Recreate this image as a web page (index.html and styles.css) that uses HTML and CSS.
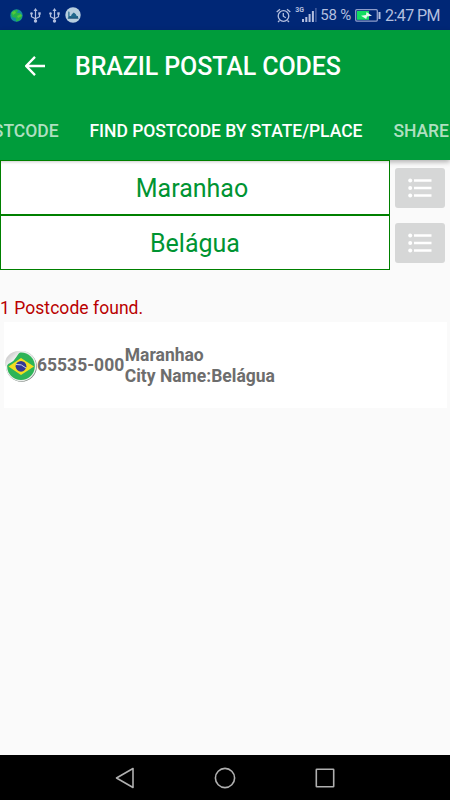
FILE: index.html
```html
<!DOCTYPE html>
<html lang="en">
<head>
    <meta charset="UTF-8">
    <meta name="viewport" content="width=device-width, initial-scale=1.0">
    <title>Brazil Postal Codes</title>
    <link rel="stylesheet" href="styles.css">
</head>
<body>
    <!-- Status bar -->
    <div class="status-bar">
        <div class="status-left">
            <svg class="globe" width="13" height="13" viewBox="0 0 13 13">
                <circle cx="6.5" cy="6.5" r="6.2" fill="#168d9c"/>
                <path d="M1 4 Q4 0 8 1 L7 4 L10 4 L12 7 Q11 12 6 12.5 L6 9 L2 8z" fill="#25b34b"/>
                <path d="M2 3l3-1 1 2-3 2zM7 7l4-2 1 2-4 2z" fill="#54c83d"/>
            </svg>
            <svg class="usb" width="11" height="15" viewBox="0 0 11 15">
                <path d="M5.5 2v11M1.5 5.500v3.200l4 2M9.500 5.500v3.200l-4 2" fill="none" stroke="#b3bfdf" stroke-width="1.200"/>
                <path d="M5.500 0l2 3h-4z" fill="#b3bfdf"/>
                <circle cx="5.500" cy="13" r="1.700" fill="#b3bfdf"/>
                <circle cx="1.500" cy="5.500" r="1.300" fill="#b3bfdf"/>
                <rect x="8.300" y="4.300" width="2.400" height="2.400" fill="#b3bfdf"/>
            </svg>
            <svg class="usb" width="11" height="15" viewBox="0 0 11 15">
                <path d="M5.5 2v11M1.5 5.500v3.200l4 2M9.500 5.500v3.200l-4 2" fill="none" stroke="#b3bfdf" stroke-width="1.200"/>
                <path d="M5.500 0l2 3h-4z" fill="#b3bfdf"/>
                <circle cx="5.500" cy="13" r="1.700" fill="#b3bfdf"/>
                <circle cx="1.500" cy="5.500" r="1.300" fill="#b3bfdf"/>
                <rect x="8.300" y="4.300" width="2.400" height="2.400" fill="#b3bfdf"/>
            </svg>
            <svg class="mosque" width="16" height="16" viewBox="0 0 16 16">
                <circle cx="8" cy="8" r="7.700" fill="#b7cedf"/>
                <path d="M3.300 11V5.500l.6-1.500.6 1.500V9H6q.2-2 2.800-3.500Q11.500 7 11.700 9H13v2z" fill="#22688c"/>
                <path d="M2.800 11.200h10.600" stroke="#164a75" stroke-width="1"/>
            </svg>
        </div>
        <div class="status-right">
            <svg class="alarm" width="15" height="15" viewBox="0 0 15 15" fill="none" stroke="#b3bfdf" stroke-width="1.300">
                <circle cx="7.500" cy="8" r="5.300"/>
                <path d="M7.300 5v3.200l2.500 1.500M.7 4L4 1.200M11 1.200L14.300 4M3.500 12.500L2 14M11.500 12.500L13 14"/>
            </svg>
            <span class="network">3G</span>
            <svg class="signal" width="15" height="14" viewBox="0 0 15 14">
                <path d="M0 11h2v3H0zM3.300 9h2v5h-2zM6.600 6h2v8h-2zM9.900 3h2v11h-2z" fill="#b3bfdf"/>
                <path d="M13.200 0h1.400v14h-1.400z" fill="#4d67a5"/>
            </svg>
            <span class="percent">58 %</span>
            <svg class="battery" width="26" height="13" viewBox="0 0 26 13">
                <rect x=".7" y=".7" width="21.600" height="11.400" rx="1" fill="none" stroke="#8e9dca" stroke-width="1.300"/>
                <rect x="2" y="2" width="12" height="8.800" fill="#12dc61"/>
                <path d="M6 6.800l5-.8.5-3 5.500 3.800-5 .6-.8 2.600z" fill="#e5f8ed"/>
                <path d="M24.500 3v7" stroke="#b3bfdf" stroke-width="2"/>
            </svg>
            <span class="clock">2:47 PM</span>
        </div>
    </div>

    <!-- Toolbar and tabs -->
    <header class="app-bar">
        <div class="toolbar">
            <svg class="back" width="20" height="20" viewBox="0 0 20 20">
                <path d="M20 10H1.700M10 .9L1.200 10l8.800 9.100" fill="none" stroke="#fff" stroke-width="2.300"/>
            </svg>
            <h1>BRAZIL POSTAL CODES</h1>
        </div>
        <nav class="tabs">
            <div class="tab tab-first"><span>STCODE</span></div>
            <div class="tab active">FIND POSTCODE BY STATE/PLACE</div>
            <div class="tab">SHARE</div>
        </nav>
    </header>

    <main class="content">
        <div class="picker">
            <div class="field field-state">Maranhao</div>
            <button class="list-button" aria-label="Choose state">
                <svg width="24" height="20" viewBox="0 0 24 20" fill="#fff">
                    <circle cx="2.200" cy="2.500" r="2"/><circle cx="2.200" cy="10" r="2"/><circle cx="2.200" cy="17.500" r="2"/>
                    <path d="M6 1.300h17.500v2.400H6zM6 8.800h17.500v2.400H6zM6 16.300h17.500v2.400H6z"/>
                </svg>
            </button>
        </div>
        <div class="picker">
            <div class="field">Belágua</div>
            <button class="list-button" aria-label="Choose place">
                <svg width="24" height="20" viewBox="0 0 24 20" fill="#fff">
                    <circle cx="2.200" cy="2.500" r="2"/><circle cx="2.200" cy="10" r="2"/><circle cx="2.200" cy="17.500" r="2"/>
                    <path d="M6 1.300h17.500v2.400H6zM6 8.800h17.500v2.400H6zM6 16.300h17.500v2.400H6z"/>
                </svg>
            </button>
        </div>

        <p class="found">1 Postcode found.</p>

        <div class="card">
            <svg class="flag" width="33" height="34" viewBox="0 0 33 34">
                <defs>
                    <linearGradient id="peel" x1="0" y1="0" x2="1" y2="1">
                        <stop offset="0" stop-color="#f4f4f4"/>
                        <stop offset=".3" stop-color="#d2d2d2"/>
                        <stop offset=".7" stop-color="#fff"/>
                        <stop offset="1" stop-color="#ccc"/>
                    </linearGradient>
                </defs>
                <circle cx="17.500" cy="17.500" r="15.300" fill="#7d8580"/>
                <circle cx="17" cy="17" r="15.200" fill="#e9eeea"/>
                <circle cx="17" cy="17.200" r="13.800" fill="#2db457"/>
                <path d="M4.500 17.500L17 9l13 8.500L17 26z" fill="#f4de20"/>
                <circle cx="17" cy="17.300" r="5.400" fill="#343795"/>
                <path d="M12 15.500q5.500-1 10 3.500" fill="none" stroke="#cbd0e8" stroke-width="1"/>
                <path d="M1 17C0 8 7 1 17 2Q14 5 12 8.500q-2.500 4-5 5-3 1-5 4z" fill="url(#peel)"/>
            </svg>
            <div class="code">65535-000</div>
            <div class="place">
                <div>Maranhao</div>
                <div>City Name:Belágua</div>
            </div>
        </div>
    </main>

    <!-- Android navigation -->
    <footer class="nav-bar">
        <svg width="20" height="22" viewBox="0 0 20 22" fill="none" stroke="#b0b0b0" stroke-width="1.600" stroke-linejoin="round">
            <path d="M1.500 11L18 1.500v19z"/>
        </svg>
        <svg width="22" height="22" viewBox="0 0 22 22" fill="none" stroke="#b0b0b0" stroke-width="1.600">
            <circle cx="11" cy="11" r="9.600"/>
        </svg>
        <svg width="20" height="20" viewBox="0 0 20 20" fill="none" stroke="#b0b0b0" stroke-width="1.600">
            <rect x="1.300" y="1.300" width="17.400" height="17.400" rx=".5"/>
        </svg>
    </footer>
</body>
</html>
```
FILE: styles.css
```css
* {
    box-sizing: border-box;
}

body {
    margin: 0;
    height: 100vh;
    display: flex;
    flex-direction: column;
    overflow: hidden;
    background: #fafafa;
    font-family: Roboto, "Liberation Sans", sans-serif;
}

svg {
    display: block;
    flex-shrink: 0;
}

/* Status bar */
.status-bar {
    height: 30px;
    flex-shrink: 0;
    display: flex;
    justify-content: space-between;
    align-items: center;
    padding: 0 10px;
    background: #002776;
    color: #b3bfdf;
}

.status-left, .status-right {
    display: flex;
    align-items: center;
}

.usb {
    margin-left: 7px;
}

.usb + .usb {
    margin-left: 8px;
}

.mosque {
    margin-left: 5px;
}

.network {
    align-self: flex-start;
    width: 8px;
    margin-left: 4px;
    font-size: 7px;
    font-weight: bold;
    line-height: 8px;
}

.signal {
    margin-left: -1px;
}

.percent {
    margin-left: 3px;
    font-size: 15px;
    letter-spacing: -0.2px;
    white-space: nowrap;
}

.battery {
    margin-left: 4px;
}

.clock {
    margin-left: 4px;
    font-size: 16px;
    letter-spacing: -0.55px;
    white-space: nowrap;
}

/* Toolbar */
.app-bar {
    height: 130px;
    flex-shrink: 0;
    background: #009c3b;
    color: #fff;
    box-shadow: 0 2px 5px rgba(0, 0, 0, 0.3);
}

.toolbar {
    height: 70px;
    display: flex;
    align-items: center;
    padding: 1px 0 0 25px;
}

h1 {
    margin: 2px 0 0 30px;
    font-size: 25px;
    font-weight: 500;
    letter-spacing: -0.1px;
    line-height: 30px;
    white-space: nowrap;
}

.tabs {
    height: 60px;
    display: flex;
    align-items: center;
    gap: 31px;
    padding-top: 1px;
    overflow: hidden;
}

.tab {
    flex-shrink: 0;
    font-size: 17.5px;
    font-weight: 500;
    letter-spacing: -0.03px;
    white-space: nowrap;
    color: rgba(255, 255, 255, 0.7);
}

.tab-first {
    width: 58.5px;
    display: flex;
    justify-content: flex-end;
}

.tab.active {
    color: #fff;
}

/* Search fields */
.content {
    flex: 1;
}

.picker {
    height: 55px;
    display: flex;
}

.field {
    width: 390px;
    display: flex;
    align-items: center;
    justify-content: center;
    padding-top: 2px;
    border: 1px solid #008000;
    background: #fff;
    color: #009432;
    font-size: 25px;
}

.field-state {
    padding-right: 6px;
    box-shadow: inset 0 3px 3px -2px rgba(0, 0, 0, 0.2);
}

.list-button {
    width: 50px;
    height: 40px;
    margin: 7.5px 5px;
    padding: 0;
    display: flex;
    align-items: center;
    justify-content: center;
    border: none;
    border-radius: 3px;
    background: #d6d7d7;
}

.found {
    margin: 28px 0 3px;
    color: #b90000;
    font-size: 17.5px;
    letter-spacing: 0.05px;
    line-height: 21px;
}

/* Result card */
.card {
    height: 86px;
    margin: 0 3px 0 4px;
    padding-top: 1px;
    display: flex;
    align-items: center;
    background: #fff;
    color: #6d6d6d;
    font-size: 17.5px;
    font-weight: bold;
    line-height: 20.5px;
}

.place {
    margin-left: 0.5px;
}

/* Bottom navigation */
.nav-bar {
    height: 45px;
    flex-shrink: 0;
    display: flex;
    align-items: center;
    justify-content: center;
    gap: 79px;
    background: #000;
}
```
